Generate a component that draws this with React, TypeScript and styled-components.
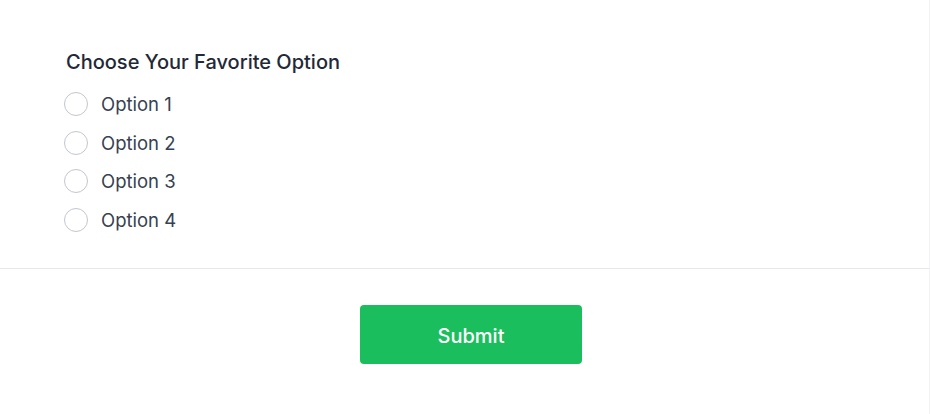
import React from "react";
import styled, { createGlobalStyle } from "styled-components";

const Global = createGlobalStyle`
  html, body { margin: 0; padding: 0; background: #ffffff; }
  body { font-family: Inter, "Noto Sans", sans-serif; }
`;

const Page = styled.div`
  width: 929px;
  height: 414px;
  border-right: 1px solid #f1f1f6;
  display: flex;
  flex-direction: column;
`;

const Body = styled.section`
  padding: 48px 64px 36px;
  display: flex;
  flex-direction: column;
  border-bottom: 1px solid #e5e7eb;
`;

const Heading = styled.h2`
  margin: 0 0 16px 2px;
  font-size: 20px;
  line-height: 28px;
  font-weight: 500;
  color: #1f2937;
`;

const OptionList = styled.div`
  display: flex;
  flex-direction: column;
  gap: 14.5px;
`;

const OptionRow = styled.label`
  display: flex;
  align-items: center;
  gap: 13px;
  height: 24px;
  cursor: pointer;
`;

const Radio = styled.input.attrs({ type: "radio" })`
  appearance: none;
  margin: 0;
  width: 24px;
  height: 24px;
  border-radius: 50%;
  border: 1.5px solid #c3c6d1;
  background: #fff;
  box-sizing: border-box;
`;

const OptionText = styled.span`
  font-size: 18.5px;
  line-height: 24px;
  color: #374151;
`;

const Footer = styled.div`
  display: flex;
  justify-content: center;
  padding: 36px 0 0 13px;
`;

const SubmitButton = styled.button`
  width: 222px;
  height: 59px;
  padding: 3px 0 0;
  border: none;
  border-radius: 4px;
  background: #1abe5c;
  color: #ffffff;
  font-family: Inter, "Noto Sans", sans-serif;
  font-size: 20px;
  font-weight: 500;
  cursor: pointer;
`;

const options = ["Option 1", "Option 2", "Option 3", "Option 4"];

export default function App() {
  return (
    <>
      <Global />
      <Page>
        <Body>
          <Heading>Choose Your Favorite Option</Heading>
          <OptionList>
            {options.map((o) => (
              <OptionRow key={o}>
                <Radio name="fav" value={o} />
                <OptionText>{o}</OptionText>
              </OptionRow>
            ))}
          </OptionList>
        </Body>
        <Footer>
          <SubmitButton>Submit</SubmitButton>
        </Footer>
      </Page>
    </>
  );
}
